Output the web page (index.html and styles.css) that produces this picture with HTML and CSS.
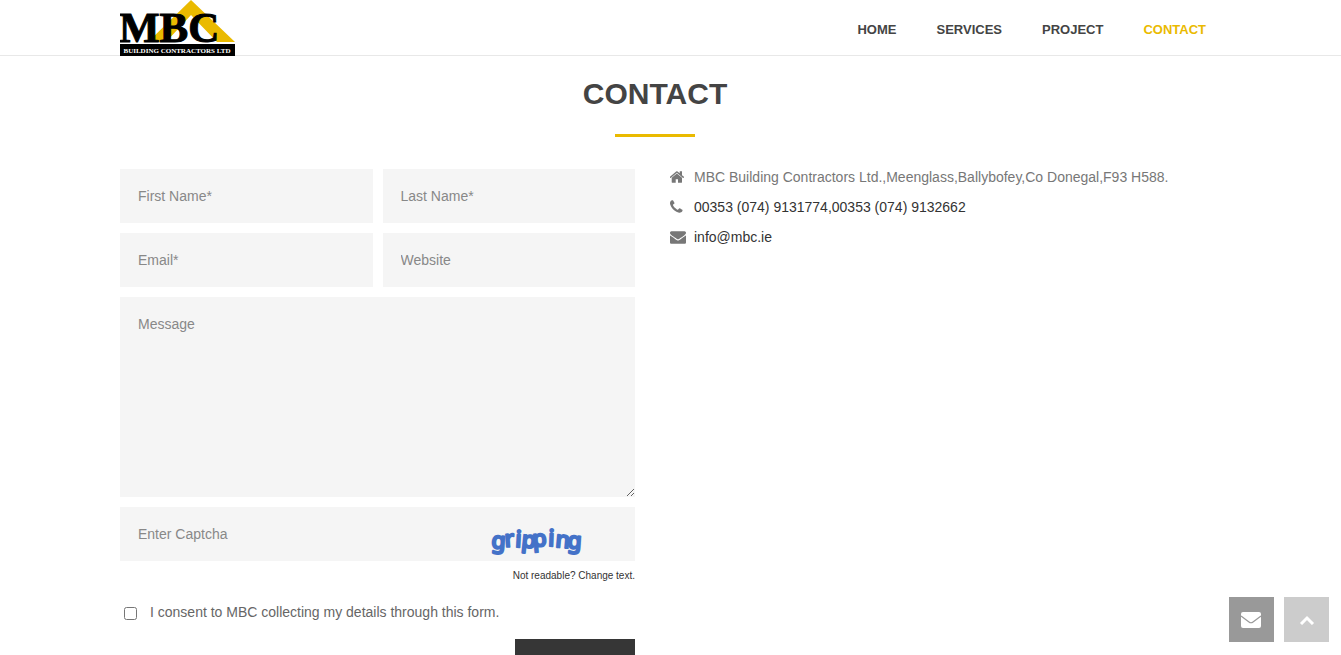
FILE: index.html
```
<!DOCTYPE html>
<html lang="en">
<head>
  <meta charset="utf-8">
  <meta name="viewport" content="width=device-width, initial-scale=1">
  <title>Contact - MBC Building Contractors Ltd</title>
  <link rel="stylesheet" href="styles.css">
</head>
<body>
  <header class="header">
    <div class="container header-inner">
      <a href="#" class="logo" aria-label="MBC Building Contractors Ltd">
        <svg width="115" height="56" viewBox="0 0 115 56">
          <polygon points="71,0 115,42 97,42 71,15 46,42 28,42" fill="#eaba00"/>
          <text class="logo-name" x="-1" y="42">MBC</text>
          <rect y="44" width="115" height="12" fill="#000"/>
          <text class="logo-sub" x="57" y="53" text-anchor="middle">BUILDING CONTRACTORS LTD</text>
        </svg>
      </a>
      <nav class="nav">
        <a href="#">HOME</a>
        <a href="#">SERVICES</a>
        <a href="#">PROJECT</a>
        <a href="#contact" class="active">CONTACT</a>
      </nav>
    </div>
  </header>

  <main class="container contact" id="contact">
    <h1 class="title">CONTACT</h1>

    <div class="columns">
      <form class="contact-form">
        <div class="row">
          <input class="field" type="text" name="firstName" placeholder="First Name*" aria-label="First Name" required>
          <input class="field" type="text" name="lastName" placeholder="Last Name*" aria-label="Last Name" required>
          <input class="field" type="email" name="email" placeholder="Email*" aria-label="Email" required>
          <input class="field" type="text" name="website" placeholder="Website" aria-label="Website">
        </div>
        <textarea class="field message" name="message" placeholder="Message" aria-label="Message"></textarea>
        <div class="captcha">
          <input class="field" type="text" name="captcha" placeholder="Enter Captcha" aria-label="Enter Captcha">
          <svg class="captcha-image" width="100" height="40" viewBox="0 0 100 40">
            <text y="29 28 28 28 28 27 28 29" x="4 18 28 34 46 61 68 80" rotate="4 -4 3 6 -5 2 5 4">gripping</text>
          </svg>
        </div>
        <a href="#" class="change-text">Not readable? Change text.</a>
        <div class="consent">
          <input type="checkbox" id="consent" name="consent">
          <label for="consent">I consent to MBC collecting my details through this form.</label>
        </div>
        <button type="submit" class="submit">SUBMIT</button>
      </form>

      <ul class="details">
        <li>
          <svg class="icon" viewBox="64 0 1792 1792"><path d="M1408 992v480q0 26-19 45t-45 19h-384v-384h-256v384h-384q-26 0-45-19t-19-45v-480q0-1 .5-3t.5-3l575-474 575 474q1 2 1 6zm223-69l-62 74q-8 9-21 11h-3q-13 0-21-7l-692-577-692 577q-12 8-24 7-13-2-21-11l-62-74q-8-10-7-23.5t11-21.5l719-599q32-26 76-26t76 26l244 204v-195q0-14 9-23t23-9h192q14 0 23 9t9 23v408l219 182q10 8 11 21.5t-7 23.5z"/></svg>
          <span>MBC Building Contractors Ltd.,Meenglass,Ballybofey,Co Donegal,F93 H588.</span>
        </li>
        <li>
          <svg class="icon" viewBox="192 0 1792 1792"><path d="M1600 1240q0 27-10 70.5t-21 68.5q-21 50-122 106-94 51-186 51-27 0-53-3.5t-57.5-12.5-47-14.5-55.5-20.5-49-18q-98-35-175-83-127-79-264-216t-216-264q-48-77-83-175-3-9-18-49t-20.5-55.5-14.5-47-12.5-57.5-3.5-53q0-92 51-186 56-101 106-122 25-11 68.5-21t70.5-10q14 0 21 3 18 6 53 76 11 19 30 54t35 63.5 31 53.5q3 4 17.5 25t21.5 35.5 7 28.5q0 20-28.5 50t-62 55-62 53-28.5 46q0 9 5 22.5t8.5 20.5 14 24 11.5 19q76 137 174 235t235 174q2 1 19 11.5t24 14 20.5 8.5 22.5 5q18 0 46-28.5t53-62 55-62 50-28.5q14 0 28.5 7t35.5 21.5 25 17.5q25 15 53.5 31t63.5 35 54 30q70 35 76 53 3 7 3 21z"/></svg>
          <a href="tel:00353749131774">00353 (074) 9131774,00353 (074) 9132662</a>
        </li>
        <li>
          <svg class="icon" viewBox="0 0 1792 1792"><path d="M1792 710v794q0 66-47 113t-113 47h-1472q-66 0-113-47t-47-113v-794q44 49 101 87 362 246 497 345 57 42 92.5 65.5t94.5 48 110 24.5h2q51 0 110-24.5t94.5-48 92.5-65.5q170-123 498-345 57-39 100-87zm0-294q0 79-49 151t-122 123q-376 261-468 325-10 7-42.5 31t-54 38.5-52 32.5-57.5 27-50 9h-2q-23 0-50-9t-57.5-27-52-32.5-54-38.5-42.5-31q-91-64-262-182.5t-205-142.5q-62-42-117-115.5t-55-136.5q0-78 41.5-130t118.5-52h1472q65 0 112.5 47t47.5 113z"/></svg>
          <a href="mailto:info@mbc.ie">info@mbc.ie</a>
        </li>
      </ul>
    </div>
  </main>

  <div class="floating">
    <button type="button" class="float-btn float-mail" aria-label="Quick contact">
      <svg width="21" height="16" viewBox="0 0 21 16">
        <rect width="20" height="16" rx="2" fill="#fff"/>
        <path d="M0 4L8 10Q10 11.500 12 10L20 4" fill="none" stroke="#999" stroke-width="1.200"/>
      </svg>
    </button>
    <button type="button" class="float-btn float-top" aria-label="Back to top">
      <svg width="16" height="10" viewBox="0 0 16 10">
        <path d="M2 9L8 3L14 9" fill="none" stroke="#fff" stroke-width="3"/>
      </svg>
    </button>
  </div>
</body>
</html>
```
FILE: styles.css
```
* {
  box-sizing: border-box;
}
body {
  margin: 0;
  background: #fff;
  color: #777;
  font-family: "Liberation Sans", Arial, sans-serif;
  font-size: 14px;
  line-height: 30px;
}
a {
  color: #333;
  text-decoration: none;
}
.container {
  max-width: 1101px;
  margin: 0 auto;
}

/* header */
.header {
  height: 56px;
  border-bottom: 1px solid #e8e8e8;
}
.header-inner {
  display: flex;
  justify-content: space-between;
  align-items: flex-start;
}
.logo svg {
  display: block;
}
.logo-name {
  font-family: "Liberation Serif", serif;
  font-size: 43px;
  font-weight: bold;
  stroke: #000;
  stroke-width: 1px;
}
.logo-sub {
  font-family: "Liberation Serif", serif;
  font-size: 7px;
  font-weight: bold;
  fill: #fff;
}
.nav {
  display: flex;
  gap: 40px;
  padding: 15px 15px 0 0;
}
.nav a {
  color: #444;
  font-size: 13px;
  font-weight: bold;
}
.nav a.active {
  color: #eaba00;
}

/* contact */
.contact {
  padding: 18px 0 30px;
}
.title {
  margin: 0 31px 32px 0;
  color: #444;
  font-size: 30px;
  line-height: 40px;
  text-align: center;
}
.title::after {
  content: "";
  display: block;
  width: 80px;
  height: 3px;
  margin: 20px auto 0;
  background: #eaba00;
}
.columns {
  display: grid;
  grid-template-columns: 550px 1fr;
}
.contact-form {
  display: flex;
  flex-direction: column;
  gap: 10px;
  padding-right: 35px;
}
.row {
  display: grid;
  grid-template-columns: 1fr 1fr;
  gap: 10px;
}
.field {
  display: block;
  width: 100%;
  height: 54px;
  padding: 18px;
  border: 0;
  border-radius: 0;
  background: #f5f5f5;
  color: #777;
  font-family: inherit;
  font-size: 14px;
  line-height: 18px;
}
.field::placeholder {
  color: #888;
}
.message {
  height: 200px;
  resize: vertical;
}
.captcha {
  position: relative;
}
.captcha-image {
  position: absolute;
  top: 12px;
  right: 48px;
}
.captcha-image text {
  font-family: "Noto Sans", sans-serif;
  font-size: 23px;
  font-weight: 500;
  fill: #4472c8;
  stroke: #4472c8;
  stroke-width: 2px;
  stroke-linejoin: round;
}
.change-text {
  align-self: flex-end;
  font-size: 10px;
  line-height: 10px;
}
.consent {
  display: flex;
  align-items: center;
  gap: 13px;
  padding: 6px 0 2px 4px;
  color: #666;
}
.consent input {
  width: 13px;
  height: 13px;
  margin: 2px 0 0;
}
.submit {
  align-self: flex-end;
  width: 120px;
  height: 60px;
  border: 0;
  background: #363636;
  color: #fff;
  font-family: inherit;
  font-size: 13px;
  font-weight: bold;
  cursor: pointer;
}
.details {
  margin: -7px 0 0;
  padding: 0;
  list-style: none;
}
.details li {
  display: flex;
  align-items: center;
  gap: 8px;
}
.icon {
  flex: none;
  width: 16px;
  height: 16px;
  fill: #777;
}

/* fixed buttons */
.floating {
  position: fixed;
  right: 12px;
  bottom: 13px;
  display: flex;
  gap: 10px;
}
.float-btn {
  display: flex;
  justify-content: center;
  align-items: center;
  width: 45px;
  height: 45px;
  padding: 0;
  border: 0;
  cursor: pointer;
}
.float-mail {
  background: #999;
}
.float-top {
  background: #ccc;
}

@media (max-width: 1100px) {
  .container {
    padding-left: 15px;
    padding-right: 15px;
  }
  .columns {
    grid-template-columns: 1fr;
    gap: 30px;
  }
  .title {
    margin-right: 0;
  }
  .contact-form {
    padding-right: 0;
  }
}
```
